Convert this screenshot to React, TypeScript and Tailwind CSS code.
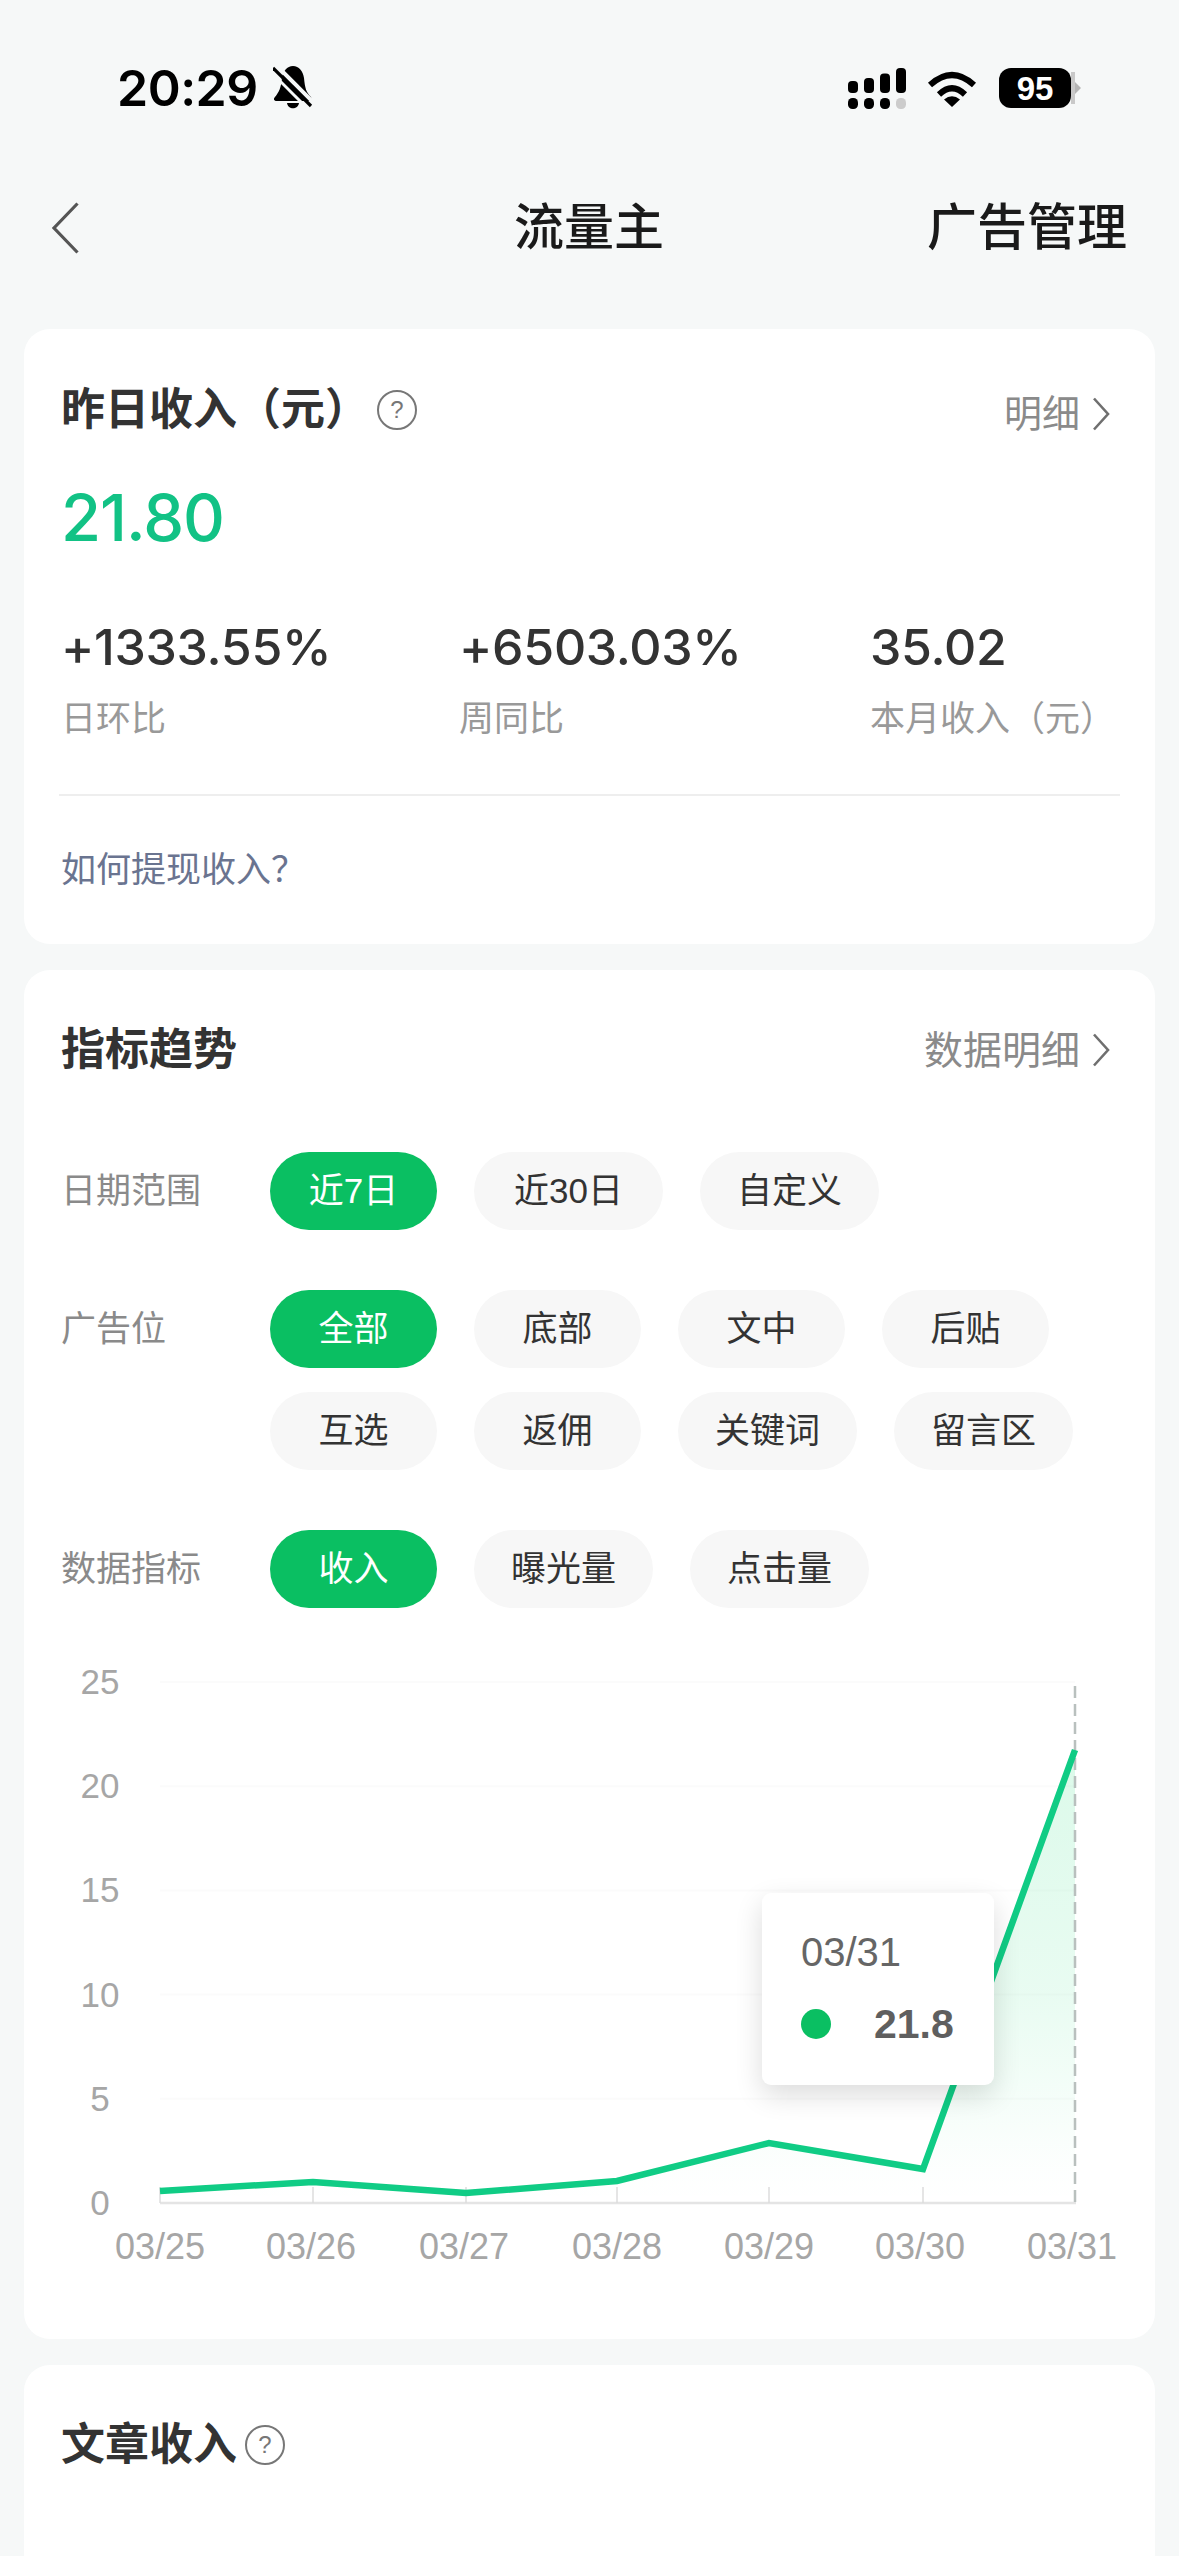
import React from "react";

const Chevron = ({ className = "" }: { className?: string }) => (
  <svg viewBox="0 0 18 34" className={className} fill="none" stroke="#6f6f6f" strokeWidth="2.6">
    <path d="M2 1.5 L16 17 L2 32.5" />
  </svg>
);

const Help = ({ className = "" }: { className?: string }) => (
  <span className={`flex h-[40px] w-[40px] items-center justify-center rounded-full border-2 border-[#777777] text-[24px] leading-none text-[#777777] ${className}`}>?</span>
);

const Chip = ({ label, active = false }: { label: string; active?: boolean }) => (
  <span
    className={`flex h-[78px] min-w-[167px] items-center justify-center rounded-full text-[35px] ${label === "近30日" ? "px-[40px]" : "px-[37px]"} ${
      active ? "bg-[#0abf62] text-white" : "bg-[#f7f7f7] text-[#333333]"
    }`}
  >
    {label}
  </span>
);

const FilterRow = ({ label, chips, active }: { label: string; chips: string[]; active: string }) => (
  <div className="flex">
    <div className="flex h-[78px] w-[209px] shrink-0 items-center text-[35px] text-[#8a8a8a]">{label}</div>
    <div className="flex w-[861px] flex-wrap gap-x-[37px] gap-y-[24px]">
      {chips.map((c) => (
        <Chip key={c} label={c} active={c === active} />
      ))}
    </div>
  </div>
);

const Stat = ({ value, label, className }: { value: string; label: string; className: string }) => (
  <div className={className}>
    <div className="h-[60px] font-['Inter',sans-serif] text-[50px] font-medium leading-[60px] tracking-[-0.3px] text-[#333333]">{value}</div>
    <div className="mt-[20px] h-[44px] text-[35px] leading-[44px] text-[#999999]">{label}</div>
  </div>
);

const xs = [160, 313, 466, 617, 769, 923, 1075];
const ys = [2190, 2181, 2192, 2180, 2142, 2168, 1749];
const xLabels = ["03/25", "03/26", "03/27", "03/28", "03/29", "03/30", "03/31"];
const xLabelCenters = [160, 311, 464, 617, 769, 920, 1072];
const line = xs.map((x, i) => `${x},${ys[i]}`).join(" ");

const Chart = () => (
  <div className="relative mt-[33px] h-[700px]">
    <svg viewBox="24 1640 1130 700" className="block h-[700px] w-[1130px]">
      <defs>
        <linearGradient id="area" x1="0" y1="0" x2="0" y2="1">
          <stop offset="0" stopColor="#22dd7a" stopOpacity="0.16" />
          <stop offset="0.55" stopColor="#22dd7a" stopOpacity="0.1" />
          <stop offset="0.92" stopColor="#22dd7a" stopOpacity="0.01" />
          <stop offset="1" stopColor="#22dd7a" stopOpacity="0" />
        </linearGradient>
      </defs>
      {[25, 20, 15, 10, 5].map((v) => (
        <line key={v} x1="160" x2="1075" y1={2202 - v * 20.84} y2={2202 - v * 20.84} stroke="#fbfbfb" strokeWidth="2" />
      ))}
      <polygon points={`160,2202 ${line} 1075,2202`} fill="url(#area)" />
      <line x1="160" x2="1076" y1="2202" y2="2202" stroke="#e4e4e4" strokeWidth="2.5" />
      {xs.slice(0, 6).map((x) => (
        <line key={x} x1={x} x2={x} y1="2186" y2="2202" stroke="#dddddd" strokeWidth="1.5" />
      ))}
      <line x1="1075" x2="1075" y1="1685" y2="2202" stroke="#b9c0be" strokeWidth="2.5" strokeDasharray="12 6" />
      <polyline points={line} fill="none" stroke="#10cc85" strokeWidth="6.5" strokeLinejoin="miter" />
      {[25, 20, 15, 10, 5, 0].map((v) => (
        <text key={v} x="100" y={2202 - v * 20.84 + 12} textAnchor="middle" fontSize="35" fill="#a6a6a6" fontFamily="Liberation Sans">
          {v}
        </text>
      ))}
      {xLabels.map((t, i) => (
        <text key={t} x={xLabelCenters[i]} y="2258" textAnchor="middle" fontSize="36" fill="#a6a6a6" fontFamily="Liberation Sans">
          {t}
        </text>
      ))}
    </svg>
    <div className="absolute left-[738px] top-[252px] h-[192px] w-[232px] rounded-[9px] bg-white pl-[39px] pt-[34px] shadow-[0_10px_28px_rgba(0,0,0,0.14)]">
      <div className="h-[50px] text-[40px] leading-[50px] text-[#666666]">03/31</div>
      <div className="mt-[22px] flex h-[50px] items-center">
        <span className="h-[30px] w-[30px] rounded-full bg-[#0abf62]" />
        <span className="ml-[43px] text-[41px] font-bold leading-[50px] text-[#5f5f5f]">21.8</span>
      </div>
    </div>
  </div>
);

export default function App() {
  return (
    <div className="h-[2556px] w-[1179px] overflow-hidden bg-[#f6f8f8] font-['Liberation_Sans','Noto_Sans_CJK_SC',sans-serif]">
      {/* Status bar */}
      <div className="flex h-[175px] items-start justify-between pl-[117px] pr-[98px] pt-[63px]">
        <div className="flex h-[50px] items-center">
          <span className="font-['Inter',sans-serif] text-[50px] font-semibold leading-[50px] tracking-[-0.5px] text-black">20:29</span>
          <svg viewBox="0 0 40 44" className="ml-[15px] h-[44px] w-[40px]">
            <path d="M20 0 C26 0 30 5 31 12 C32 22 33 26 38 31 C39 33 38 35 36 35 L4 35 C1 35 0 33 2 31 C6 26 8 22 9 12 C10 5 14 0 20 0 Z M14 37 L26 37 C25 44 15 44 14 37 Z" fill="#000" />
            <line x1="3" y1="-1" x2="44" y2="40" stroke="#f6f8f8" strokeWidth="4" />
            <line x1="0" y1="2" x2="38" y2="40" stroke="#000" strokeWidth="3.2" />
            <line x1="-3" y1="5" x2="32" y2="40" stroke="#f6f8f8" strokeWidth="3" />
          </svg>
        </div>
        <div className="flex h-[50px] items-center">
          <svg viewBox="0 0 58 41" className="h-[41px] w-[58px]">
            <rect x="0" y="13" width="10" height="12" rx="4" fill="#000" />
            <rect x="16" y="10" width="10" height="15" rx="4" fill="#000" />
            <rect x="32" y="5.5" width="10" height="19.5" rx="4" fill="#000" />
            <rect x="48" y="0" width="10" height="25" rx="4" fill="#000" />
            <rect x="0" y="30" width="10" height="11" rx="4.5" fill="#000" />
            <rect x="16" y="30" width="10" height="11" rx="4.5" fill="#000" />
            <rect x="32" y="30" width="10" height="11" rx="4.5" fill="#000" />
            <rect x="48" y="30" width="10" height="11" rx="4.5" fill="#cccccc" />
          </svg>
          <svg viewBox="0 0 50 37" className="ml-[21px] h-[37px] w-[50px]">
            <path d="M3 15 Q25 -5 47 15" fill="none" stroke="#000" strokeWidth="6" />
            <path d="M12 24.5 Q25 12 38 24.5" fill="none" stroke="#000" strokeWidth="6" />
            <path d="M17 29.5 Q25 23 33 29.5 L25 37 Z" fill="#000" />
          </svg>
          <div className="ml-[22px] flex items-center">
            <div className="flex h-[40px] w-[72px] items-center justify-center rounded-[12px] bg-black font-['Liberation_Sans',sans-serif] text-[33px] font-bold leading-none text-white">95</div>
            <div className="h-[40px] w-[4px] bg-[#c9c9c9] [clip-path:inset(4px_0_4px_0)]" />
            <div className="h-0 w-0 border-y-[6px] border-l-[6px] border-y-transparent border-l-[#b5b5b5]" />
          </div>
        </div>
      </div>

      {/* Nav */}
      <div className="grid h-[106px] grid-cols-[1fr_auto_1fr] items-center pl-[51px] pr-[52px]">
        <svg viewBox="0 0 28 52" className="h-[52px] w-[28px]" fill="none" stroke="#555555" strokeWidth="3.2">
          <path d="M26.5 1.5 L3 26 L26.5 50.5" />
        </svg>
        <div className="text-[50px] font-medium leading-none text-[#1a1a1a]">流量主</div>
        <div className="justify-self-end text-[50px] font-medium leading-none text-[#1a1a1a]">广告管理</div>
      </div>

      {/* Yesterday income */}
      <section className="mx-[24px] mt-[48px] h-[615px] rounded-[26px] bg-white px-[37px] pt-[51px]">
        <div className="flex h-[60px] items-center justify-between">
          <div className="flex items-center">
            <span className="text-[44px] font-bold leading-none text-[#333333]">昨日收入（元）</span>
            <Help className="ml-[8px]" />
          </div>
          <div className="mr-[8px] mt-[7px] flex items-center text-[38px] leading-none text-[#8a8a8a]">
            明细
            <Chevron className="ml-[12px] h-[34px] w-[18px]" />
          </div>
        </div>
        <div className="mt-[38px] h-[80px] font-['Inter',sans-serif] text-[65px] font-medium leading-[80px] tracking-[-1px] text-[#12c285]">21.80</div>
        <div className="mt-[59px] flex">
          <Stat className="w-[398px]" value="+1333.55%" label="日环比" />
          <Stat className="w-[411px]" value="+6503.03%" label="周同比" />
          <Stat className="flex-1 whitespace-nowrap" value="35.02" label="本月收入（元）" />
        </div>
        <div className="-mx-[2px] mt-[53px] h-[1.5px] bg-[#eeeeee]" />
        <div className="mt-[49px] h-[50px] text-[35px] leading-[50px] text-[#6a7490]">如何提现收入？</div>
      </section>

      {/* Trends */}
      <section className="mx-[24px] mt-[26px] h-[1369px] rounded-[26px] bg-white pt-[50px]">
        <div className="ml-[37px] mr-[45px] flex h-[60px] items-center justify-between">
          <span className="text-[44px] font-bold leading-none text-[#333333]">指标趋势</span>
          <div className="flex items-center text-[39px] leading-none text-[#8a8a8a]">
            数据明细
            <Chevron className="ml-[12px] h-[34px] w-[18px]" />
          </div>
        </div>
        <div className="ml-[37px] mr-[38px] mt-[72px] flex flex-col gap-y-[60px]">
          <FilterRow label="日期范围" chips={["近7日", "近30日", "自定义"]} active="近7日" />
          <FilterRow label="广告位" chips={["全部", "底部", "文中", "后贴", "互选", "返佣", "关键词", "留言区"]} active="全部" />
          <FilterRow label="数据指标" chips={["收入", "曝光量", "点击量"]} active="收入" />
        </div>
        <Chart />
      </section>

      {/* Article income */}
      <section className="mx-[24px] mt-[26px] h-[300px] rounded-t-[26px] bg-white px-[37px] pt-[50px]">
        <div className="flex h-[60px] items-center">
          <span className="text-[44px] font-bold leading-none text-[#333333]">文章收入</span>
          <Help className="ml-[8px]" />
        </div>
      </section>
    </div>
  );
}
